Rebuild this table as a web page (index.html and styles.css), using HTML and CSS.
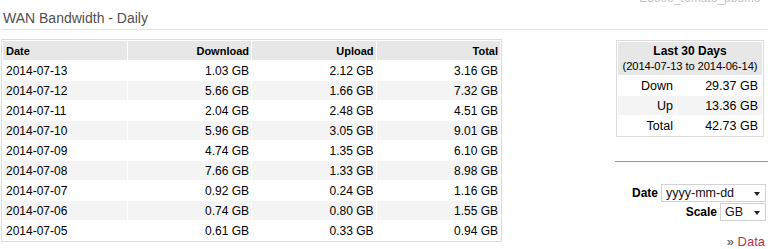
FILE: index.html
```html
<!DOCTYPE html>
<html lang="en">
<head>
    <meta charset="UTF-8">
    <title>WAN Bandwidth - Daily</title>
    <link rel="stylesheet" href="styles.css">
</head>
<body>
    <div class="topbar">
        <h1 class="title">WAN Bandwidth - Daily</h1>
        <div class="host">E3000_tomato_pbumc</div>
    </div>

    <div class="content">
        <div class="main">
            <table class="bw-table">
                <thead>
                    <tr>
                        <th class="left">Date</th>
                        <th>Download</th>
                        <th>Upload</th>
                        <th>Total</th>
                    </tr>
                </thead>
                <tbody>
                    <tr><td class="left">2014-07-13</td><td>1.03 GB</td><td>2.12 GB</td><td>3.16 GB</td></tr>
                    <tr><td class="left">2014-07-12</td><td>5.66 GB</td><td>1.66 GB</td><td>7.32 GB</td></tr>
                    <tr><td class="left">2014-07-11</td><td>2.04 GB</td><td>2.48 GB</td><td>4.51 GB</td></tr>
                    <tr><td class="left">2014-07-10</td><td>5.96 GB</td><td>3.05 GB</td><td>9.01 GB</td></tr>
                    <tr><td class="left">2014-07-09</td><td>4.74 GB</td><td>1.35 GB</td><td>6.10 GB</td></tr>
                    <tr><td class="left">2014-07-08</td><td>7.66 GB</td><td>1.33 GB</td><td>8.98 GB</td></tr>
                    <tr><td class="left">2014-07-07</td><td>0.92 GB</td><td>0.24 GB</td><td>1.16 GB</td></tr>
                    <tr><td class="left">2014-07-06</td><td>0.74 GB</td><td>0.80 GB</td><td>1.55 GB</td></tr>
                    <tr><td class="left">2014-07-05</td><td>0.61 GB</td><td>0.33 GB</td><td>0.94 GB</td></tr>
                </tbody>
            </table>
        </div>

        <div class="side">
            <table class="summary">
                <tr>
                    <th colspan="2"><b>Last 30 Days</b><br><span class="range">(2014-07-13 to 2014-06-14)</span></th>
                </tr>
                <tr><td class="label">Down</td><td>29.37 GB</td></tr>
                <tr><td class="label">Up</td><td>13.36 GB</td></tr>
                <tr><td class="label">Total</td><td>42.73 GB</td></tr>
            </table>

            <div class="divider"></div>

            <div class="controls">
                <div class="ctl-row">
                    <span class="ctl-label">Date</span>
                    <div class="select select-date">yyyy-mm-dd</div>
                </div>
                <div class="ctl-row">
                    <span class="ctl-label">Scale</span>
                    <div class="select select-scale">GB</div>
                </div>
            </div>

            <div class="more">&raquo; <a href="#">Data</a></div>
        </div>
    </div>
</body>
</html>
```

FILE: styles.css
```css
* {
    margin: 0;
    padding: 0;
    box-sizing: border-box;
}

body {
    font-family: "Liberation Sans", Arial, sans-serif;
    font-size: 12px;
    color: #000;
    background: #fff;
    width: 768px;
    height: 249px;
    overflow: hidden;
}

.topbar {
    display: flex;
    justify-content: space-between;
    align-items: flex-start;
    height: 30px;
    margin-left: 2px;
    border-bottom: 1px solid #e4e4e4;
}

.title {
    font-size: 14px;
    font-weight: normal;
    line-height: 16px;
    color: #505050;
    padding: 10px 0 0 1px;
}

.host {
    font-size: 12px;
    line-height: 14px;
    color: #c4c4c4;
    margin-top: -9px;
    padding-right: 8px;
}

.content {
    display: flex;
    justify-content: space-between;
}

/* daily table */
.bw-table {
    width: 501px;
    margin: 9px 0 0 1px;
    table-layout: fixed;
    border-collapse: separate;
    border-spacing: 1px;
    border: 1px solid #dcdcdc;
}

.bw-table th,
.bw-table td {
    height: 19px;
    text-align: right;
    padding: 0 2px 0 3px;
    white-space: nowrap;
}

.bw-table th {
    background: #e7e7e7;
    font-size: 11px;
    font-weight: bold;
}

.bw-table tbody tr:nth-child(even) td {
    background: #f4f4f4;
}

.bw-table .left {
    text-align: left;
}

/* sidebar */
.side {
    width: 153px;
    display: flex;
    flex-direction: column;
}

.summary {
    width: 148px;
    margin: 10px 0 0 1px;
    border-collapse: separate;
    border-spacing: 1px;
    border: 1px solid #dcdcdc;
}

.summary th {
    background: #e7e7e7;
    font-weight: normal;
    line-height: 15px;
    padding: 2px 0 1px;
    text-align: center;
    white-space: nowrap;
}

.summary th b {
    font-size: 12px;
}

.summary .range {
    font-size: 11.2px;
    letter-spacing: -0.1px;
}

.summary td {
    height: 19px;
    text-align: right;
    padding: 0 4px 0 2px;
    font-size: 12.5px;
}

.summary td.label {
    width: 58px;
    padding-right: 3px;
}

.summary tr:nth-child(3) td {
    background: #f4f4f4;
}

.divider {
    height: 1px;
    background: #9a9a9a;
    margin-top: 24px;
}

.controls {
    display: flex;
    flex-direction: column;
    gap: 1px;
    margin-top: 22px;
    padding-right: 2px;
}

.ctl-row {
    display: flex;
    justify-content: flex-end;
    align-items: center;
    gap: 3px;
    height: 18px;
}

.ctl-label {
    font-weight: bold;
}

.select {
    position: relative;
    height: 18px;
    line-height: 16px;
    border: 1px solid #d2d2d2;
    background: #fff;
    padding-left: 4px;
    font-size: 12.5px;
    color: #111;
}

.select::after {
    content: "";
    position: absolute;
    right: 5px;
    top: 7px;
    border-left: 3.5px solid transparent;
    border-right: 3.5px solid transparent;
    border-top: 4px solid #222;
}

.select-date {
    width: 105px;
}

.select-scale {
    width: 46px;
}

.more {
    margin-top: 13px;
    text-align: right;
    padding-right: 3px;
    font-size: 13px;
    line-height: 15px;
    color: #444;
}

.more a {
    color: #bd3548;
    text-decoration: none;
}
```
